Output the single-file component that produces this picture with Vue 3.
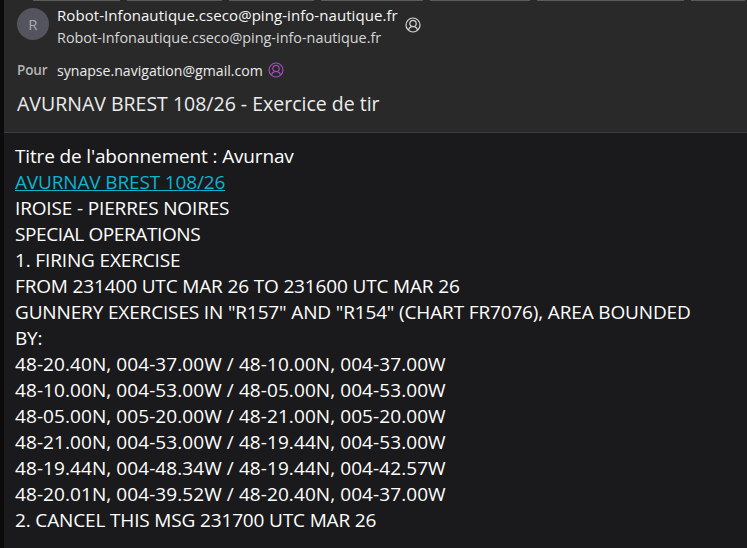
<script setup>
const lines = [
  { text: "IROISE - PIERRES NOIRES" },
  { text: "SPECIAL OPERATIONS", tight: true },
  { text: "1. FIRING EXERCISE" },
  { text: "FROM 231400 UTC MAR 26 TO 231600 UTC MAR 26" },
  { text: 'GUNNERY EXERCISES IN "R157" AND "R154" (CHART FR7076), AREA BOUNDED' },
  { text: "BY:" },
  { text: "48-20.40N, 004-37.00W / 48-10.00N, 004-37.00W", coord: true },
  { text: "48-10.00N, 004-53.00W / 48-05.00N, 004-53.00W", coord: true },
  { text: "48-05.00N, 005-20.00W / 48-21.00N, 005-20.00W", coord: true },
  { text: "48-21.00N, 004-53.00W / 48-19.44N, 004-53.00W", coord: true },
  { text: "48-19.44N, 004-48.34W / 48-19.44N, 004-42.57W", coord: true },
  { text: "48-20.01N, 004-39.52W / 48-20.40N, 004-37.00W", coord: true },
  { text: "2. CANCEL THIS MSG 231700 UTC MAR 26" },
];
const tabs = [87, 95, 85, 102, 100, 147, 54];
</script>

<template>
  <div class="window">
    <div class="tabs">
      <span v-for="(w, i) in tabs" :key="i" class="tab" :style="{ width: w + 'px' }"></span>
    </div>
    <header class="head">
      <div class="from">
        <div class="avatar">R</div>
        <div class="names">
          <div class="name">Robot-Infonautique.cseco@ping-info-nautique.fr</div>
          <div class="addr">Robot-Infonautique.cseco@ping-info-nautique.fr</div>
        </div>
        <svg class="person" viewBox="0 0 16 16" width="16" height="16" fill="none" stroke="#d6d6d6" stroke-width="1.2">
          <circle cx="8" cy="8" r="7" />
          <circle cx="8" cy="6.5" r="3.2" />
          <path d="M3.4 13.2c.5-2.2 2-3.2 3.3-3.5M12.6 13.2c-.5-2.2-2-3.2-3.3-3.5" />
        </svg>
      </div>
      <div class="to">
        <span class="pour">Pour</span>
        <span class="rcpt">synapse.navigation@gmail.com</span>
        <svg class="person" viewBox="0 0 16 16" width="16" height="16" fill="none" stroke="#9b4fb5" stroke-width="1.2">
          <circle cx="8" cy="8" r="7" />
          <circle cx="8" cy="6.5" r="3.2" />
          <path d="M3.4 13.2c.5-2.2 2-3.2 3.3-3.5M12.6 13.2c-.5-2.2-2-3.2-3.3-3.5" />
        </svg>
      </div>
      <h1 class="subject">AVURNAV BREST 108/26 - Exercice de tir</h1>
    </header>
    <main class="body">
      <div class="line">Titre de l'abonnement : Avurnav</div>
      <div class="line"><a class="link">AVURNAV BREST 108/26</a></div>
      <div v-for="(l, i) in lines" :key="i" class="line" :class="{ coord: l.coord, tight: l.tight }">{{ l.text }}</div>
    </main>
  </div>
</template>

<style>
html, body { margin: 0; background: #0b0b0b; }
</style>

<style scoped>
.window {
  width: 747px;
  height: 548px;
  overflow: hidden;
  box-sizing: border-box;
  padding-left: 4px;
  background: #0b0b0b;
  font-family: "Open Sans", "Noto Sans", sans-serif;
  display: flex;
  flex-direction: column;
}
.tabs {
  height: 1px;
  display: flex;
  gap: 7px;
  padding-left: 29px;
  background: #292929;
  flex: none;
}
.tab { background: #5a5a5a; height: 1px; flex: none; }
.head {
  background: #292929;
  height: 132px;
  flex: none;
  box-sizing: border-box;
  border-bottom: 1px solid #3d3d3d;
  padding: 7px 0 0 13px;
}
.from { display: flex; align-items: flex-start; }
.avatar {
  width: 32px;
  height: 32px;
  border-radius: 50%;
  background: #54545e;
  color: #a9a9ae;
  font-size: 15px;
  line-height: 32px;
  text-align: center;
  margin-right: 8px;
}
.names { width: 348px; margin-top: -2px; }
.name { color: #f6f6f6; font-size: 15px; line-height: 18px; height: 23px; letter-spacing: 0.06px; white-space: nowrap; }
.addr { color: #d6d6d6; font-size: 14.4px; line-height: 18px; white-space: nowrap; }
.from .person { margin-top: 9px; }
.to { display: flex; align-items: center; margin-top: 13px; height: 20px; }
.pour { color: #b5b5b5; font-size: 13.5px; font-weight: 600; width: 40px; letter-spacing: -0.1px; }
.rcpt { color: #ebebeb; font-size: 14.1px; margin-right: 5px; white-space: nowrap; }
.subject {
  margin: 12px 0 0;
  color: #ececec;
  font-size: 19.5px;
  font-weight: 400;
  line-height: 24px;
}
.body {
  flex: 1;
  background: #1a1a1c;
  color: #fff;
  padding: 10px 0 0 11px;
  font-size: 19px;
  line-height: 26px;
  letter-spacing: -0.15px;
  white-space: nowrap;
}
.coord { letter-spacing: 0.08px; }
.tight { letter-spacing: -0.39px; }
.link { color: #0cb4cf; text-decoration: underline; }
</style>
